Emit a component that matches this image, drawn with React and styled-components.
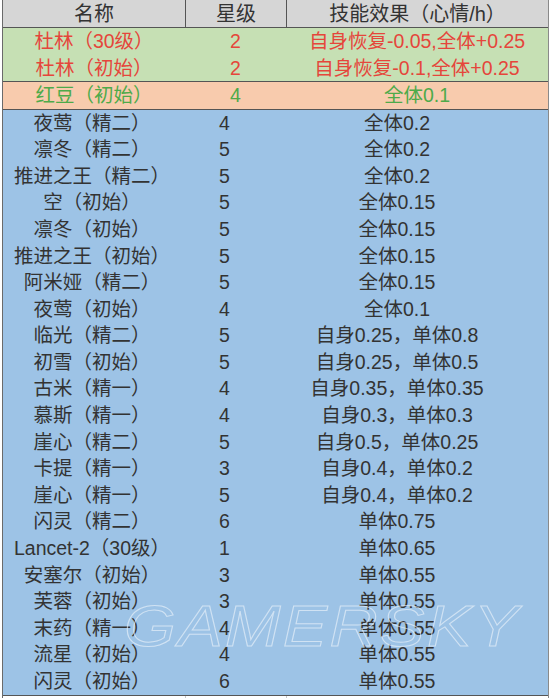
import React from "react";
import styled, { createGlobalStyle } from "styled-components";

const Global = createGlobalStyle`
  html, body { margin: 0; padding: 0; background: #ffffff; }
  body { width: 550px; height: 698px; overflow: hidden; }
`;

const Page = styled.div`
  position: relative;
  width: 550px;
  height: 698px;
  box-sizing: border-box;
  padding: 0 1px 0 2px;
  font-family: "Liberation Sans", "Noto Sans CJK SC", sans-serif;
  background: #ffffff;
`;

const Table = styled.div`
  display: flex;
  flex-direction: column;
  border-left: 1px solid #6a6a6a;
  border-right: 1px solid #8a8a8a;
`;

const HeaderRow = styled.div`
  display: grid;
  grid-template-columns: 182px 101px 1fr;
  height: 27px;
  background: #d6d6d6;
  border-bottom: 1px solid #555;
`;

const HeaderCell = styled.div`
  display: flex;
  align-items: center;
  justify-content: center;
  font-size: 20px;
  color: #333;
  line-height: 1;
  border-left: ${(p) => (p.$first ? "none" : "1px solid #555")};
`;

const Group = styled.div`
  display: flex;
  flex-direction: column;
  background: ${(p) => p.$bg};
  border-bottom: 1px solid #555;
`;

const Row = styled.div`
  display: grid;
  grid-template-columns: 182px 101px 1fr;
  height: ${(p) => p.$h}px;
  color: ${(p) => p.$color};
`;

const Cell = styled.div`
  display: flex;
  align-items: center;
  justify-content: center;
  font-size: 19.5px;
  line-height: 1;
  white-space: nowrap;
  padding-top: 1px;
  padding-right: ${(p) => p.$shift || 0}px;
`;

const Footer = styled.div`
  display: grid;
  grid-template-columns: 182px 101px 1fr;
  flex: 1;
  min-height: 2px;
`;

const FooterCell = styled.div`
  border-left: ${(p) => (p.$first ? "none" : "1px solid #c8c8c8")};
`;

const Watermark = styled.div`
  position: absolute;
  left: 124px;
  top: 597px;
  font-family: "Liberation Sans", Arial, sans-serif;
  font-style: italic;
  font-size: 58px;
  letter-spacing: 2px;
  transform: scaleX(1.15);
  transform-origin: left top;
  color: transparent;
  -webkit-text-stroke: 1px rgba(235, 243, 250, 0.65);
  pointer-events: none;
  line-height: 1;
`;

const groups = [
  {
    bg: "#c6e0b4",
    color: "#e5463b",
    shift: [0, 0, 0],
    rows: [
      ["杜林（30级）", "2", "自身恢复-0.05,全体+0.25"],
      ["杜林（初始）", "2", "自身恢复-0.1,全体+0.25"],
    ],
  },
  {
    bg: "#f8cbad",
    color: "#4eaa4a",
    shift: [0, 0, 0],
    rows: [["红豆（初始）", "4", "全体0.1"]],
  },
  {
    bg: "#9dc3e6",
    color: "#333333",
    shift: [4, 22, 40],
    rows: [
      ["夜莺（精二）", "4", "全体0.2"],
      ["凛冬（精二）", "5", "全体0.2"],
      ["推进之王（精二）", "5", "全体0.2"],
      ["空（初始）", "5", "全体0.15"],
      ["凛冬（初始）", "5", "全体0.15"],
      ["推进之王（初始）", "5", "全体0.15"],
      ["阿米娅（精二）", "5", "全体0.15"],
      ["夜莺（初始）", "4", "全体0.1"],
      ["临光（精二）", "5", "自身0.25，单体0.8"],
      ["初雪（初始）", "5", "自身0.25，单体0.5"],
      ["古米（精一）", "4", "自身0.35，单体0.35"],
      ["慕斯（精一）", "4", "自身0.3，单体0.3"],
      ["崖心（精二）", "5", "自身0.5，单体0.25"],
      ["卡提（精一）", "3", "自身0.4，单体0.2"],
      ["崖心（精一）", "5", "自身0.4，单体0.2"],
      ["闪灵（精二）", "6", "单体0.75"],
      ["Lancet-2（30级）", "1", "单体0.65"],
      ["安塞尔（初始）", "3", "单体0.55"],
      ["芙蓉（初始）", "3", "单体0.55"],
      ["末药（精一）", "4", "单体0.55"],
      ["流星（初始）", "4", "单体0.55"],
      ["闪灵（初始）", "6", "单体0.55"],
    ],
  },
];

export default function App() {
  return (
    <Page>
      <Global />
      <Table>
        <HeaderRow>
          <HeaderCell $first>名称</HeaderCell>
          <HeaderCell>星级</HeaderCell>
          <HeaderCell>技能效果（心情/h）</HeaderCell>
        </HeaderRow>
        {groups.map((g, gi) => (
          <Group key={gi} $bg={g.bg}>
            {g.rows.map((r, ri) => (
              <Row key={ri} $color={g.color} $h={gi === 2 ? 26.6 : 26.5}>
                <Cell $shift={g.shift[0]}>{r[0]}</Cell>
                <Cell $shift={g.shift[1]}>{r[1]}</Cell>
                <Cell $shift={g.shift[2]}>{r[2]}</Cell>
              </Row>
            ))}
          </Group>
        ))}
        <Footer>
          <FooterCell $first />
          <FooterCell />
          <FooterCell />
        </Footer>
      </Table>
      <Watermark>GAMERSKY</Watermark>
    </Page>
  );
}
